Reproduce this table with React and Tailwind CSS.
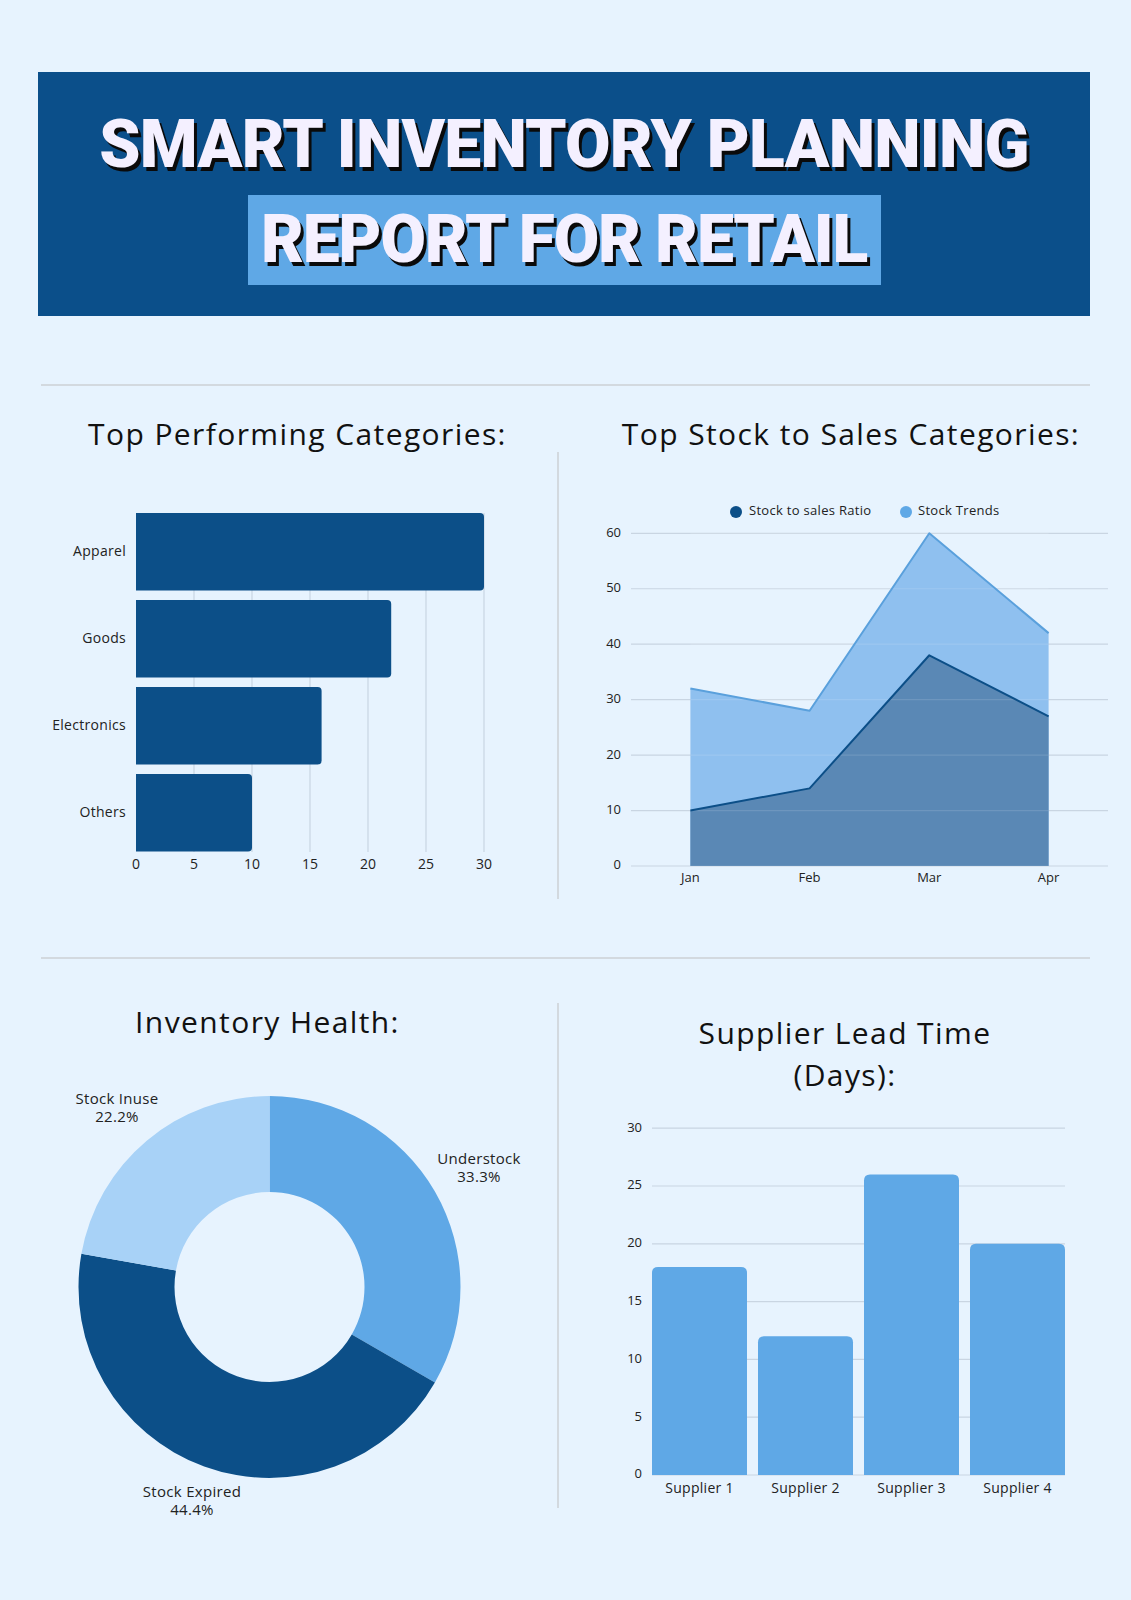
import React from "react";

const DARK = "#0c4f88";
const MID = "#5fa8e6";
const LIGHT = "#a8d2f7";
const GRID = "#c9d5e2";
const LABEL = "#222222";
const FONT = "'Open Sans', 'Liberation Sans', sans-serif";

// Top Performing Categories — horizontal bars
const categories = [
  { label: "Apparel", value: 30, top: 513 },
  { label: "Goods", value: 22, top: 600 },
  { label: "Electronics", value: 16, top: 687 },
  { label: "Others", value: 10, top: 774 },
];

function hBarPath(x, y, w, h, r) {
  return `M${x} ${y} H${x + w - r} Q${x + w} ${y} ${x + w} ${y + r} V${y + h - r} Q${x + w} ${y + h} ${x + w - r} ${y + h} H${x} Z`;
}

function vBarPath(x, y, w, h, r) {
  return `M${x} ${y + h} V${y + r} Q${x} ${y} ${x + r} ${y} H${x + w - r} Q${x + w} ${y} ${x + w} ${y + r} V${y + h} Z`;
}

const CategoryChart = () => {
  const x0 = 136;
  const unit = 11.6;
  return (
    <svg viewBox="38 470 519 420" width="519" height="420" className="block" style={{ fontFamily: FONT }}>
      {[5, 10, 15, 20, 25, 30].map((t) => (
        <line key={t} x1={x0 + t * unit} x2={x0 + t * unit} y1={513} y2={852} stroke={GRID} strokeWidth="1.2" />
      ))}
      {categories.map((c) => (
        <g key={c.label}>
          <path d={hBarPath(x0, c.top, c.value * unit, 77.5, 4)} fill={DARK} />
          <text x={126} y={c.top + 39} textAnchor="end" dominantBaseline="middle" fontSize="14" letterSpacing="0.3" fill={LABEL}>
            {c.label}
          </text>
        </g>
      ))}
      {[0, 5, 10, 15, 20, 25, 30].map((t) => (
        <text key={t} x={x0 + t * unit} y={865} textAnchor="middle" dominantBaseline="middle" fontSize="14" fill={LABEL}>
          {t}
        </text>
      ))}
    </svg>
  );
};

// Top Stock to Sales — overlapping areas
const months = ["Jan", "Feb", "Mar", "Apr"];
const monthX = [690.4, 809.6, 929.3, 1048.6];
const trends = [32, 28, 60, 42];
const ratio = [10, 14, 38, 27];

const StockChart = () => {
  const y0 = 866;
  const unit = 5.545;
  const y = (v) => y0 - v * unit;
  const area = (vals) =>
    `M${monthX[0]} ${y0} ` + vals.map((v, i) => `L${monthX[i]} ${y(v)}`).join(" ") + ` L${monthX[3]} ${y0} Z`;
  const line = (vals) => vals.map((v, i) => `${i ? "L" : "M"}${monthX[i]} ${y(v)}`).join(" ");
  const ticks = [0, 10, 20, 30, 40, 50, 60];
  return (
    <svg viewBox="559 470 572 420" width="572" height="420" className="block" style={{ fontFamily: FONT }}>
      {ticks.map((t) => (
        <g key={t}>
          <line x1={631} x2={1108} y1={y(t)} y2={y(t)} stroke={GRID} strokeWidth="1.2" />
          <text x={621} y={y(t)} textAnchor="end" dominantBaseline="middle" fontSize="13" fill={LABEL}>
            {t}
          </text>
        </g>
      ))}
      <path d={area(trends)} fill="#8fc0ef" />
      <path d={area(ratio)} fill="#5a88b5" />
      {ticks.map((t) => (
        <line key={t} x1={monthX[0]} x2={monthX[3]} y1={y(t)} y2={y(t)} stroke="#ffffff" strokeOpacity="0.12" strokeWidth="1.2" />
      ))}
      <path d={line(trends)} fill="none" stroke="#5aa0dc" strokeWidth="2" strokeLinejoin="round" />
      <path d={line(ratio)} fill="none" stroke={DARK} strokeWidth="2" strokeLinejoin="round" />
      {months.map((m, i) => (
        <text key={m} x={monthX[i]} y={879} textAnchor="middle" dominantBaseline="middle" fontSize="13" fill={LABEL}>
          {m}
        </text>
      ))}
      <circle cx={736} cy={512} r={6} fill={DARK} />
      <text x={749} y={512} dominantBaseline="middle" fontSize="13" letterSpacing="0.3" fill={LABEL}>
        Stock to sales Ratio
      </text>
      <circle cx={906} cy={512} r={6} fill={MID} />
      <text x={918} y={512} dominantBaseline="middle" fontSize="13" letterSpacing="0.3" fill={LABEL}>
        Stock Trends
      </text>
    </svg>
  );
};

// Inventory Health — donut
const slices = [
  { from: 0, to: 120, color: MID },
  { from: 120, to: 280, color: DARK },
  { from: 280, to: 360, color: LIGHT },
];

function ringSlice(cx, cy, R, r, a0, a1) {
  const p = (rad, a) => {
    const t = (a * Math.PI) / 180;
    return [cx + rad * Math.sin(t), cy - rad * Math.cos(t)];
  };
  const large = a1 - a0 > 180 ? 1 : 0;
  const [x1, y1] = p(R, a0);
  const [x2, y2] = p(R, a1);
  const [x3, y3] = p(r, a1);
  const [x4, y4] = p(r, a0);
  return `M${x1} ${y1} A${R} ${R} 0 ${large} 1 ${x2} ${y2} L${x3} ${y3} A${r} ${r} 0 ${large} 0 ${x4} ${y4} Z`;
}

const DonutLabel = ({ x, y, name, pct }) => (
  <text x={x} textAnchor="middle" fontSize="15" letterSpacing="0.3" fill={LABEL}>
    <tspan x={x} y={y}>{name}</tspan>
    <tspan x={x} y={y + 17.5}>{pct}</tspan>
  </text>
);

const HealthChart = () => (
  <svg viewBox="38 1060 519 480" width="519" height="480" className="block" style={{ fontFamily: FONT }}>
    {slices.map((s) => (
      <path key={s.from} d={ringSlice(269.5, 1287, 191, 95, s.from, s.to)} fill={s.color} />
    ))}
    <DonutLabel x={117} y={1104} name="Stock Inuse" pct="22.2%" />
    <DonutLabel x={479} y={1164} name="Understock" pct="33.3%" />
    <DonutLabel x={192} y={1497} name="Stock Expired" pct="44.4%" />
  </svg>
);

// Supplier Lead Time — vertical bars
const suppliers = [
  { label: "Supplier 1", value: 18, x: 652 },
  { label: "Supplier 2", value: 12, x: 758 },
  { label: "Supplier 3", value: 26, x: 864 },
  { label: "Supplier 4", value: 20, x: 970 },
];

const SupplierChart = () => {
  const y0 = 1475;
  const unit = 11.56;
  return (
    <svg viewBox="559 1100 572 420" width="572" height="420" className="block" style={{ fontFamily: FONT }}>
      {[0, 5, 10, 15, 20, 25, 30].map((t) => (
        <g key={t}>
          <line x1={652} x2={1065} y1={y0 - t * unit} y2={y0 - t * unit} stroke={GRID} strokeWidth="1.2" />
          <text x={642} y={y0 - t * unit} textAnchor="end" dominantBaseline="middle" fontSize="13" fill={LABEL}>
            {t}
          </text>
        </g>
      ))}
      {suppliers.map((s) => (
        <g key={s.label}>
          <path d={vBarPath(s.x, y0 - s.value * unit, 95, s.value * unit, 6)} fill={MID} />
          <text x={s.x + 47.5} y={1489} textAnchor="middle" dominantBaseline="middle" fontSize="14" letterSpacing="0.3" fill={LABEL}>
            {s.label}
          </text>
        </g>
      ))}
    </svg>
  );
};

const Heading = ({ children, className = "" }) => (
  <h2
    className={`text-center text-[30px] leading-[38px] font-medium text-[#111111] tracking-[1.4px] ${className}`}
    style={{ fontFamily: FONT }}
  >
    {children}
  </h2>
);

const TITLE_FONT = { fontFamily: "Roboto, 'Liberation Sans', sans-serif" };

export default function App() {
  return (
    <div className="w-[1131px] min-h-[1600px] bg-[#e7f3fe] overflow-hidden">
      {/* Banner */}
      <div className="ml-[38px] mt-[72px] w-[1052px] h-[244px] bg-[#0b4f8a] flex flex-col items-center">
        <h1
          className="mt-[41px] text-[66px] leading-[64px] font-black text-[#f4f0ff] tracking-[-0.8px] [text-shadow:3px_4px_0_#0a0a0a]"
          style={TITLE_FONT}
        >
          SMART INVENTORY PLANNING
        </h1>
        <div className="mt-[18px] w-[633px] h-[90px] bg-[#5fa8e6] flex items-center justify-center">
          <span
            className="text-[66px] leading-[64px] font-black text-[#f4f0ff] tracking-[-1.2px] [text-shadow:3px_4px_0_#0a0a0a]"
            style={TITLE_FONT}
          >
            REPORT FOR RETAIL
          </span>
        </div>
      </div>

      {/* Section 1 */}
      <div className="ml-[41px] mt-[68px] w-[1049px] h-[2px] bg-[#d3d9df]" />
      <div className="ml-[38px] flex">
        <div className="w-[519px]">
          <Heading className="mt-[29px]">Top Performing Categories:</Heading>
          <div className="mt-[17px]">
            <CategoryChart />
          </div>
        </div>
        <div className="mt-[66px] w-[2px] h-[447px] bg-[#d3d9df]" />
        <div className="w-[572px]">
          <Heading className="mt-[29px] pl-[12px]">Top Stock to Sales Categories:</Heading>
          <div className="mt-[17px]">
            <StockChart />
          </div>
        </div>
      </div>

      {/* Section 2 */}
      <div className="ml-[41px] mt-[58px] w-[1049px] h-[2px] bg-[#d3d9df]" />
      <div className="ml-[38px] flex">
        <div className="w-[519px]">
          <Heading className="mt-[44px] pr-[60px]">Inventory Health:</Heading>
          <div className="mt-[19px]">
            <HealthChart />
          </div>
        </div>
        <div className="mt-[44px] w-[2px] h-[505px] bg-[#d3d9df]" />
        <div className="w-[572px]">
          <Heading className="mt-[53px] leading-[42px]">
            Supplier Lead Time
            <br />
            (Days):
          </Heading>
          <div className="mt-[4px]">
            <SupplierChart />
          </div>
        </div>
      </div>
    </div>
  );
}
